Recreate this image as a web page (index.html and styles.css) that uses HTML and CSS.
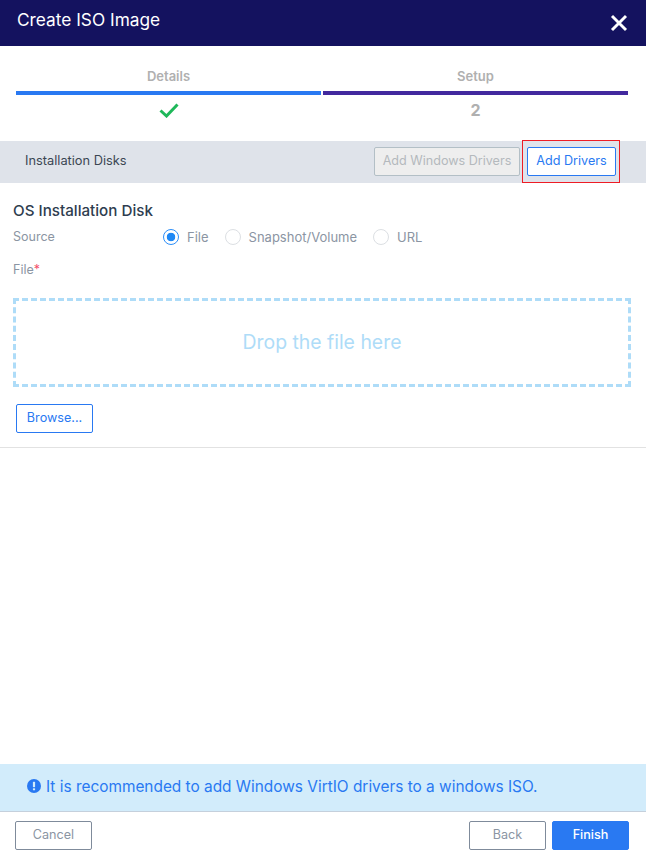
FILE: index.html
```html
<!DOCTYPE html>
<html lang="en">
<head>
    <meta charset="UTF-8">
    <meta name="viewport" content="width=device-width, initial-scale=1.0">
    <title>Create ISO Image</title>
    <link rel="stylesheet" href="styles.css">
</head>
<body>
    <div class="modal">
        <div class="modal-header">
            <h1>Create ISO Image</h1>
            <svg class="close-icon" width="18" height="18" viewBox="0 0 18 18">
                <path d="M2 2 L16 16 M16 2 L2 16" stroke="#fff" stroke-width="2.9" fill="none"/>
            </svg>
        </div>
        <div class="steps">
            <div class="step step-done">
                <div class="step-label">Details</div>
                <div class="step-bar"></div>
                <div class="step-mark">
                    <svg width="20" height="15" viewBox="0 0 20 15">
                        <path d="M1.5 7.5 L7.5 13 L18.5 1.5" stroke="#1fb85a" stroke-width="3" fill="none"/>
                    </svg>
                </div>
            </div>
            <div class="step step-current">
                <div class="step-label">Setup</div>
                <div class="step-bar"></div>
                <div class="step-mark">2</div>
            </div>
        </div>
        <div class="toolbar">
            <span class="toolbar-title">Installation Disks</span>
            <div class="toolbar-actions">
                <button class="btn btn-disabled" type="button">Add Windows Drivers</button>
                <span class="highlight">
                    <button class="btn btn-outline btn-drivers" type="button">Add Drivers</button>
                </span>
            </div>
        </div>
        <div class="content">
            <h2>OS Installation Disk</h2>
            <div class="source-row">
                <span class="field-label">Source</span>
                <div class="radio-group">
                    <label class="radio"><span class="radio-dot checked"></span>File</label>
                    <label class="radio"><span class="radio-dot"></span>Snapshot/Volume</label>
                    <label class="radio"><span class="radio-dot"></span>URL</label>
                </div>
            </div>
            <div class="field-label file-label">File<span class="required">*</span></div>
            <div class="dropzone">Drop the file here</div>
            <button class="btn btn-outline btn-browse" type="button">Browse...</button>
        </div>
        <div class="spacer"></div>
        <div class="alert">
            <svg width="14" height="14" viewBox="0 0 14 14">
                <circle cx="7" cy="7" r="7" fill="#2979f2"/>
                <rect x="5.9" y="2.8" width="2.2" height="5.4" rx="0.6" fill="#d2ecfb"/>
                <rect x="5.9" y="9.2" width="2.2" height="2.1" rx="0.6" fill="#d2ecfb"/>
            </svg>
            <span>It is recommended to add Windows VirtIO drivers to a windows ISO.</span>
        </div>
        <div class="modal-footer">
            <button class="btn btn-gray" type="button">Cancel</button>
            <div class="footer-right">
                <button class="btn btn-gray" type="button">Back</button>
                <button class="btn btn-primary" type="button">Finish</button>
            </div>
        </div>
    </div>
</body>
</html>
```

FILE: styles.css
```css
body {
    font-family: Inter, Roboto, sans-serif;
    margin: 0;
    padding: 0;
    background-color: #fff;
}
.modal {
    display: flex;
    flex-direction: column;
    height: 856px;
    box-sizing: border-box;
    overflow: hidden;
}
.modal-header {
    display: flex;
    justify-content: space-between;
    align-items: center;
    height: 46px;
    padding: 0 18px 0 17px;
    background-color: #14125f;
    flex-shrink: 0;
}
.modal-header h1 {
    margin: 0 0 7px;
    font-size: 17.3px;
    font-weight: 400;
    color: #fff;
}
.close-icon {
    margin-top: -1px;
}
.steps {
    display: flex;
    gap: 2px;
    height: 95px;
    padding: 0 18px 0 16px;
    box-sizing: border-box;
}
.step {
    flex: 1;
    text-align: center;
}
.step-label {
    margin-top: 23px;
    height: 22px;
    line-height: 15px;
    font-size: 13px;
    font-weight: 600;
    color: #b0b0b0;
}
.step-bar {
    height: 4px;
}
.step-done .step-bar {
    background-color: #2979f2;
}
.step-current .step-bar {
    background-color: #42299e;
}
.step-mark {
    display: flex;
    justify-content: center;
    align-items: center;
    height: 30px;
    font-size: 16px;
    font-weight: 700;
    color: #b0b0b0;
}
.toolbar {
    display: flex;
    justify-content: space-between;
    align-items: center;
    height: 42px;
    padding: 0 26px 0 25px;
    background-color: #dfe3ea;
    flex-shrink: 0;
}
.toolbar-title {
    margin-top: -3px;
    font-size: 12.8px;
    color: #3b4653;
}
.toolbar-actions {
    display: flex;
    align-items: center;
    gap: 2px;
}
.highlight {
    display: flex;
    margin-top: -1px;
    padding: 6px 3px 6px 4px;
    border: 1px solid #ee1c25;
}
.btn {
    height: 29px;
    padding: 0 0 2px;
    border-radius: 2px;
    font-family: inherit;
    font-size: 12.6px;
    box-sizing: border-box;
    background-color: #fff;
}
.btn-disabled {
    width: 146px;
    margin-top: -1px;
    color: #b4b9bd;
    background-color: #eeeeee;
    border: 1px solid #b3bfc6;
}
.btn-outline {
    color: #2979f2;
    border: 1px solid #2979f2;
}
.btn-drivers {
    width: 89px;
}
.btn-browse {
    width: 77px;
    margin: 17px 0 0 3px;
}
.btn-gray {
    width: 77px;
    color: #8b95a3;
    border: 1px solid #7f8b9b;
}
.btn-primary {
    width: 77px;
    color: #fff;
    background-color: #2979f2;
    border: 1px solid #2979f2;
    font-weight: 500;
}
.content {
    padding: 19px 15px 14px 13px;
    border-bottom: 1px solid #e2e2e2;
}
.content h2 {
    margin: 0;
    height: 18px;
    line-height: 18px;
    font-size: 15.2px;
    font-weight: 500;
    color: #2e3d4f;
}
.source-row {
    display: flex;
    align-items: center;
    margin-top: 7px;
    height: 20px;
}
.field-label {
    font-size: 12.5px;
    color: #8b95a3;
}
.source-row .field-label {
    width: 150px;
    margin-top: -1px;
}
.radio-group {
    display: flex;
    gap: 16px;
}
.radio {
    display: flex;
    align-items: center;
    gap: 8px;
    font-size: 13px;
    color: #8b95a3;
}
.radio-dot {
    width: 16px;
    height: 16px;
    border: 1px solid #dcdfe3;
    border-radius: 50%;
    box-sizing: border-box;
    background-color: #fff;
}
.radio-dot.checked {
    border-color: #2c8ef8;
    background: radial-gradient(circle, #1e88f5 0 4px, #fff 4.6px);
}
.file-label {
    margin-top: 15px;
    line-height: 15px;
}
.required {
    color: #f4506a;
}
.dropzone {
    display: flex;
    justify-content: center;
    align-items: center;
    height: 89px;
    margin-top: 21px;
    padding-bottom: 2px;
    border: 3px dashed #aedcf8;
    box-sizing: border-box;
    font-size: 19.4px;
    color: #aedcf8;
}
.spacer {
    flex: 1;
}
.alert {
    display: flex;
    align-items: center;
    gap: 5px;
    height: 48px;
    padding: 0 0 3px 27px;
    box-sizing: border-box;
    background-color: #d2ecfb;
    border-bottom: 1px solid #c5d0dc;
    font-size: 15.4px;
    color: #2979f2;
    flex-shrink: 0;
}
.modal-footer {
    display: flex;
    justify-content: space-between;
    padding: 9px 17px 6px 15px;
    flex-shrink: 0;
}
.footer-right {
    display: flex;
    gap: 6px;
}
```
